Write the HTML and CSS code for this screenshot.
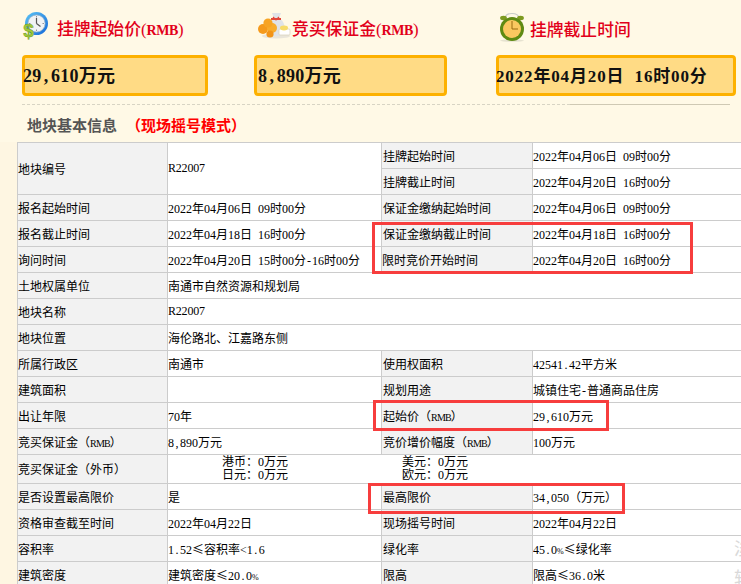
FILE: index.html
```html
<!DOCTYPE html>
<html lang="zh">
<head>
<meta charset="utf-8">
<title>地块基本信息</title>
<link rel="stylesheet" href="styles.css">
</head>
<body>
<div class="top">
<header class="stats">
  <section class="stat">
    <h2 class="stat-title">
      <svg class="icon icon-clock" viewBox="0 0 26 27" aria-hidden="true">
        <defs><linearGradient id="gb" x1="0" y1="0" x2="1" y2="1"><stop offset="0" stop-color="#5cc4f5"/><stop offset="1" stop-color="#1468d8"/></linearGradient></defs>
        <circle cx="14.5" cy="11.5" r="11.5" fill="url(#gb)"/>
        <circle cx="14.5" cy="11.5" r="8.6" fill="#f1f3f5" stroke="#9fb4c4" stroke-width=".7"/>
        <path d="M14.5 4v1.5M14.5 17.5V19M7 11.5h1.5M20.5 11.5H22" stroke="#778" stroke-width=".8"/>
        <path d="M14.5 11.5V6M14.5 11.5l4 3" stroke="#555" stroke-width="1.2" fill="none"/>
        <text x="6.5" y="25" class="dollar">$</text>
      </svg>
      <span>挂牌起始价(<span class="t-rmb">RMB</span>)</span>
    </h2>
    <div class="stat-box stat-box-a"><span class="val-first">29<span class="p">,</span>610万元</span></div>
  </section>
  <section class="stat">
    <h2 class="stat-title">
      <svg class="icon icon-bag" viewBox="0 0 35 28" aria-hidden="true">
        <ellipse cx="19" cy="25" rx="14" ry="2.6" fill="#e9e5da"/>
        <path d="M15 2h9l-2 5c5 3 6 8 6 12 0 4-4 6-8 6s-9-2-9-6c0-5 3-9 6-12z" fill="#dfe3e8"/>
        <path d="M14 8h10" stroke="#e2483c" stroke-width="2"/>
        <path d="M16 6l3 3 3-3" stroke="#e2483c" stroke-width="1.2" fill="none"/>
        <circle cx="6" cy="18" r="5" fill="#f59a1c"/>
        <circle cx="15" cy="17" r="5" fill="#f8ac2c"/>
        <circle cx="11" cy="12" r="4.6" fill="#f7a424"/>
        <circle cx="13" cy="23" r="3.6" fill="#f29418"/>
        <rect x="22" y="18" width="11" height="6" rx="1" fill="#fff" stroke="#d8d0b8" stroke-width=".7"/>
        <ellipse cx="27" cy="17" rx="4" ry="2.4" fill="#f7dc6a"/>
      </svg>
      <span>竞买保证金(<span class="t-rmb">RMB</span>)</span>
    </h2>
    <div class="stat-box stat-box-b"><span class="val-pad">8<span class="p">,</span>890万元</span></div>
  </section>
  <section class="stat">
    <h2 class="stat-title">
      <svg class="icon icon-alarm" viewBox="0 0 26 31" aria-hidden="true">
        <ellipse cx="13" cy="29.6" rx="12" ry="1.2" fill="#e6e2d0"/>
        <path d="M6 7C7 1 19 1 20 7" fill="none" stroke="#c8ccc8" stroke-width="1.2"/>
        <ellipse cx="4.5" cy="7" rx="3.4" ry="2.2" fill="#7d9a1f"/>
        <ellipse cx="21.5" cy="7" rx="3.4" ry="2.2" fill="#7d9a1f"/>
        <circle cx="13" cy="18" r="12" fill="#5f8a12"/>
        <circle cx="13" cy="18" r="9" fill="#fbc860"/>
        <path d="M13 18V10M13 18h6" stroke="#9a6a10" stroke-width="1" fill="none"/>
      </svg>
      <span>挂牌截止时间</span>
    </h2>
    <div class="stat-box stat-box-c"><span class="val-date">2022年04月20日&nbsp;&nbsp;16时00分</span></div>
  </section>
</header>
<div class="rule"><span class="rule-dash"></span><span class="rule-solid"></span></div>
<h3 class="section-title">地块基本信息<span class="mode">（现场摇号模式）</span></h3>
</div>
<table class="info">
  <colgroup><col class="c1"><col class="c2"><col class="c3"><col class="c4"></colgroup>
  <tbody>
    <tr><th rowspan="2">地块编号</th><td rowspan="2" class="code">R22007</td><th class="in">挂牌起始时间</th><td>2022年04月06日 09时00分</td></tr>
    <tr><th class="in">挂牌截止时间</th><td>2022年04月20日 16时00分</td></tr>
    <tr><th>报名起始时间</th><td>2022年04月06日 09时00分</td><th class="in">保证金缴纳起始时间</th><td>2022年04月06日 09时00分</td></tr>
    <tr><th>报名截止时间</th><td>2022年04月18日 16时00分</td><th class="in">保证金缴纳截止时间</th><td>2022年04月18日 16时00分</td></tr>
    <tr><th>询问时间</th><td>2022年04月20日 15时00分<span class="hy">-</span>16时00分</td><th>限时竞价开始时间</th><td>2022年04月20日 16时00分</td></tr>
    <tr><th>土地权属单位</th><td colspan="3">南通市自然资源和规划局</td></tr>
    <tr><th>地块名称</th><td colspan="3" class="code">R22007</td></tr>
    <tr><th>地块位置</th><td colspan="3">海伦路北、江嘉路东侧</td></tr>
    <tr><th>所属行政区</th><td>南通市</td><th class="in">使用权面积</th><td>42541<span class="p">.</span>42平方米</td></tr>
    <tr><th>建筑面积</th><td></td><th class="in">规划用途</th><td>城镇住宅<span class="hy">-</span>普通商品住房</td></tr>
    <tr><th>出让年限</th><td>70年</td><th class="in">起始价（<span class="rmb">RMB</span>）</th><td>29<span class="p">,</span>610万元</td></tr>
    <tr><th>竞买保证金（<span class="rmb">RMB</span>）</th><td>8<span class="p">,</span>890万元</td><th class="in">竞价增价幅度（<span class="rmb">RMB</span>）</th><td>100万元</td></tr>
    <tr class="tall"><th>竞买保证金（外币）</th><td colspan="3">
      <div class="fx"><span>港币：0万元</span><span>美元：0万元</span><span>日元：0万元</span><span>欧元：0万元</span></div>
    </td></tr>
    <tr><th>是否设置最高限价</th><td>是</td><th class="in">最高限价</th><td>34<span class="p">,</span>050（万元）</td></tr>
    <tr><th>资格审查截至时间</th><td>2022年04月22日</td><th class="in">现场摇号时间</th><td>2022年04月22日</td></tr>
    <tr><th>容积率</th><td>1<span class="p">.</span>52<span class="le">≤</span>容积率&lt;1<span class="p">.</span>6</td><th class="in">绿化率</th><td>45<span class="p">.</span>0<span class="pct">%</span><span class="le">≤</span>绿化率</td></tr>
    <tr><th>建筑密度</th><td>建筑密度<span class="le">≤</span>20<span class="p">.</span>0<span class="pct">%</span></td><th class="in">限高</th><td>限高<span class="le">≤</span>36<span class="p">.</span>0米</td></tr>
  </tbody>
</table>
<div class="mark mark-1"></div>
<div class="mark mark-2"></div>
<div class="mark mark-3"></div>
<div class="watermark">淡<br>轻</div>
</body>
</html>
```
FILE: styles.css
```css
html, body { margin: 0; padding: 0; height: 584px; overflow: hidden; }
body {
  position: relative;
  background: #fef6e2;
  font-family: "Liberation Serif", "Noto Sans CJK SC", serif;
  font-size: 12px;
  color: #000;
  text-spacing-trim: space-all;
  word-spacing: 3px;
}
.top { background: #fff9e6; height: 142px; }
.stats {
  display: grid;
  grid-template-columns: 232px 242px 1fr;
  padding: 11px 0 0 22px;
  height: 85px;
}
.stat { display: flex; flex-direction: column; }
.stat-title {
  display: flex;
  align-items: flex-end;
  height: 31px;
  margin: 0 0 13px;
  color: #e2001a;
  font-size: 16.8px;
  font-weight: 500;
  line-height: 22px;
}
.t-rmb { font-size: 14px; letter-spacing: -.4px; font-weight: 700; }
.icon { display: block; flex: none; }
.icon-clock { width: 26px; height: 27px; margin: 0 9px 3px 0; overflow: visible; }
.icon-bag { width: 35px; height: 28px; margin: 0 0 3px 3px; }
.icon-alarm { width: 26px; height: 31px; margin: 0 5px 0 3px; }
.dollar {
  font-size: 19px;
  font-weight: 700;
  fill: #a2cb3a;
  stroke: #6f9a1e;
  stroke-width: .5;
  text-anchor: middle;
  font-family: "Liberation Sans", sans-serif;
}
.stat-box {
  box-sizing: border-box;
  height: 41px;
  padding-top: 2px;
  border: 3px solid #fdb100;
  border-radius: 4px;
  background: #ffdb85;
  font-weight: 700;
  font-size: 18px;
  line-height: 33px;
  color: #111;
  white-space: nowrap;
  word-spacing: 0;
  letter-spacing: .3px;
}
.stat-box-a { width: 186px; }
.stat-box-b { width: 193px; }
.stat-box-c { width: 240px; }
.val-first { margin-left: -2px; }
.val-pad { margin-left: 1px; }
.val-date { margin-left: -3px; font-size: 17px; letter-spacing: .85px; }
.rule {
  display: flex;
  margin: 8px 11px 0 22px;
}
.rule-dash { width: 548px; border-top: 1px dashed #d8d4c4; }
.rule-solid { flex: 1; border-top: 1px solid #cfc9b4; }
.section-title {
  margin: 0;
  padding: 11px 0 0 27px;
  font-size: 15px;
  line-height: 20px;
  font-weight: 700;
  color: #555;
}
.mode { margin-left: 9px; color: #f00; }
.info {
  margin-left: 17px;
  width: 780px;
  table-layout: fixed;
  border-collapse: collapse;
  background: #fff;
  font-size: 12px;
}
.c1 { width: 150px; }
.c2 { width: 214px; }
.c3 { width: 151px; }
.info tr { height: 26px; }
.info tr.tall { height: 29px; }
.info th, .info td {
  box-sizing: border-box;
  border: 1px solid #ccc;
  padding: 0;
  font-weight: 400;
  text-align: left;
  white-space: nowrap;
  overflow: hidden;
}
.info th { background: #f2f2f2; }
.info th.in { padding-left: 1px; }
.code { letter-spacing: -.2px; }
.rmb { font-size: 10px; letter-spacing: -.8px; }
.p { padding: 0 .125em; }
.hy { padding: 0 1px; }
.pct { font-size: 8px; }
.le { font-family: "Noto Sans CJK SC", sans-serif; }
.fx {
  display: grid;
  grid-template-columns: 180px auto;
  padding-left: 54px;
  line-height: 13px;
}
.mark {
  position: absolute;
  box-sizing: border-box;
  border: 3px solid #f73d3d;
  pointer-events: none;
}
.mark-1 { left: 372px; top: 222px; width: 321px; height: 52px; }
.mark-2 { left: 373px; top: 400px; width: 236px; height: 31px; }
.mark-3 { left: 368px; top: 483px; width: 257px; height: 31px; }
.watermark {
  position: absolute;
  left: 734px;
  top: 534px;
  font-size: 18px;
  line-height: 30px;
  color: #d9d9d9;
}
```
